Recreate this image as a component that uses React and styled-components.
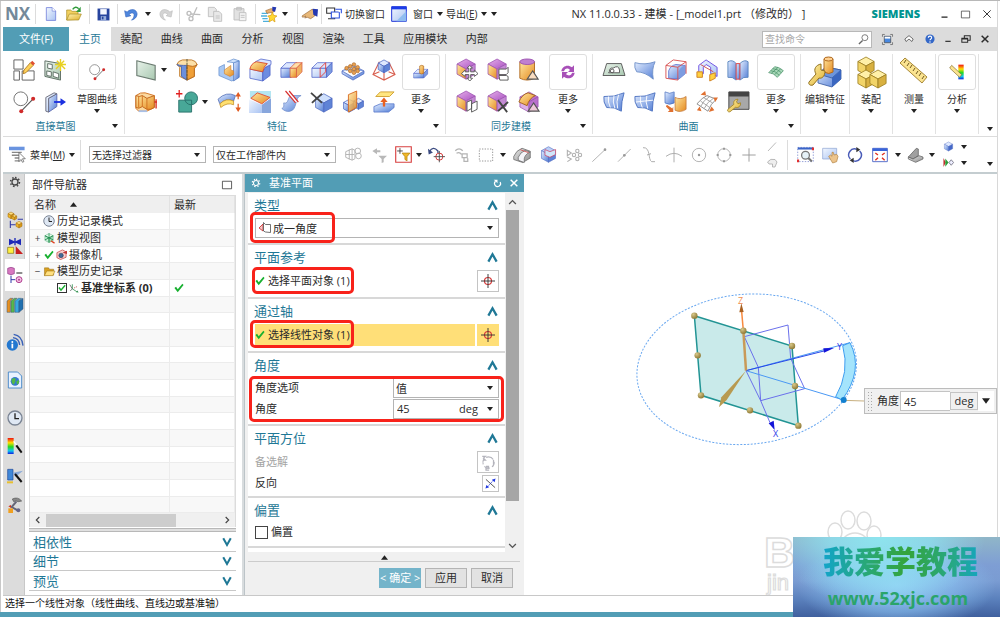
import React from "react";
import styled, { createGlobalStyle } from "styled-components";

const Global = createGlobalStyle`
  *, *::before, *::after { box-sizing: border-box; }
  body { margin: 0; background: #fff; color: #2b2b2b; font: 11px/16px "Open Sans", "Noto Sans CJK SC", sans-serif; }
  button, input, select { font: inherit; color: inherit; margin: 0; padding: 0; border: 0; background: none; border-radius: 0; outline: 0; }
  button, select { cursor: pointer; }
  h1, h2, p { margin: 0; font-size: inherit; font-weight: inherit; }
  svg { display: block; flex: none; overflow: visible; }
`;

const teal = "#529db5";
const link = "#1f7896";

/* ---------- drawing helpers ---------- */

const Defs = styled.svg`position: absolute; width: 0; height: 0;`;

const Gradients = () => (
  <Defs aria-hidden="true">
    <defs>
      {[
        ["gb", "#e4eeff", "#4f7bd4"],
        ["gl", "#f2f7ff", "#a9c3f2"],
        ["go", "#ffe7a0", "#e58a20"],
        ["gy", "#fff3b0", "#e0b030"],
        ["gp", "#e6b0ea", "#a850c0"],
        ["gg", "#e8f2ea", "#a8c8b0"],
        ["gk", "#e8e8e8", "#8d8d8d"],
      ].map(([id, a, b]) => (
        <linearGradient key={id} id={id} x1="0" y1="0" x2="1" y2="1">
          <stop offset="0" stopColor={a} />
          <stop offset="1" stopColor={b} />
        </linearGradient>
      ))}
      <linearGradient id="rainbow" x1="0" y1="0" x2="0" y2="1">
        <stop offset="0" stopColor="#f01010" />
        <stop offset=".3" stopColor="#ffe000" />
        <stop offset=".55" stopColor="#20d820" />
        <stop offset=".8" stopColor="#10c8f0" />
        <stop offset="1" stopColor="#1020e0" />
      </linearGradient>
      <radialGradient id="ball" cx=".35" cy=".3" r=".8">
        <stop offset="0" stopColor="#d8c88a" />
        <stop offset="1" stopColor="#86702a" />
      </radialGradient>
    </defs>
  </Defs>
);

const Cube = ({ x = 12, y = 12, r = 10, t = "#dfe9ff", l = "url(#gb)", q = "#5f83d6", s = "#4a66c0" }) => {
  const w = r * 0.9, h = r / 2;
  return (
    <g stroke={s} strokeWidth=".8" strokeLinejoin="round">
      <path fill={t} d={`M${x} ${y - r}L${x + w} ${y - h}L${x} ${y}L${x - w} ${y - h}Z`} />
      <path fill={l} d={`M${x - w} ${y - h}L${x} ${y}V${y + r}L${x - w} ${y + h}Z`} />
      <path fill={q} d={`M${x + w} ${y - h}L${x} ${y}V${y + r}L${x + w} ${y + h}Z`} />
    </g>
  );
};

const Slab = ({ x, y, w, h, d, f = "url(#gb)", t = "#dce7ff", q = "#7d9ce0", s = "#4a5fc8" }) => (
  <g stroke={s} strokeWidth=".8" strokeLinejoin="round">
    <path fill={f} d={`M${x} ${y}h${w}v${h}h${-w}z`} />
    <path fill={t} d={`M${x} ${y}l${d} ${-d}h${w}l${-d} ${d}z`} />
    <path fill={q} d={`M${x + w} ${y}l${d} ${-d}v${h}l${-d} ${d}z`} />
  </g>
);

const PinkCube = () => <Cube x={11} y={11} r={11} t="url(#gp)" l="url(#go)" q="#c48ad4" s="#9a50b0" />;

const Wrench = ({ x, y, k = 1 }) => (
  <g transform={`translate(${x} ${y}) scale(${k})`}>
    <path fill="url(#gy)" stroke="#a08020" strokeWidth=".8" d="M0 10L6 5C5 2 7 0 10 0L8.500 2.500L10 4.500L12.500 3.500C13 7 10 9 7.500 8L2 12.500C0 13-1 11 0 10Z" />
  </g>
);

const art = {
  newDoc: <><path fill="url(#gl)" stroke="#6a78d8" strokeWidth="1.300" d="M4 1h10l6 6v16H4z" /><path fill="#fff" stroke="#6a78d8" d="M14 1v6h6" /></>,
  open: <><path fill="#f2d060" stroke="#a88a20" d="M1 21V6h6l2 2h9v12z" /><path fill="url(#gy)" stroke="#a88a20" d="M1 21l4-9h18l-4 9z" /><path fill="none" stroke="#2f9a3a" strokeWidth="2.200" d="M10 5c3-4 6-4 9-1" /><path fill="#2f9a3a" d="M22 1v8h-7z" /></>,
  save: <><path fill="#27449e" d="M1 1h22v22H1z" /><path fill="#f4f6ff" d="M6 2h12v10H6z" /><path fill="#9ab0dc" d="M7 15h10v8H7z" /><path fill="#27449e" d="M9 16h3v5H9z" /></>,
  undo: <path fill="#4e86dc" stroke="#3a68c0" d="M1 6l2 10 8-2-3-2c4-4 9-3 8 2 0 3-2 5-4 7 5-1 9-5 9-10C20 3 11 2 5 8z" />,
  redo: <path fill="#d4d4d4" stroke="#bbb" d="M23 6l-2 10-8-2 3-2c-4-4-9-3-8 2 0 3 2 5 4 7-5-1-9-5-9-10C4 3 13 2 19 8z" />,
  cut: <g fill="none" stroke="#bdbdbd" strokeWidth="2"><circle cx="6" cy="11" r="3" /><circle cx="9" cy="19" r="3" /><path d="M9 12l14 1M11 17L18 2" /></g>,
  copy: <g fill="#e8e8e8" stroke="#bdbdbd" strokeWidth="1.300"><path d="M2 2h9l3 3v11H2z" /><path d="M10 8h8l4 4v11H10z" /><path d="M13 15h6M13 18h6" /></g>,
  paste: <g fill="#e2e2e2" stroke="#bdbdbd" strokeWidth="1.300"><path d="M3 4h15v17H3zM7 2h7v4H7z" /><path fill="#f4f4f4" d="M11 10h10v12H11z" /><path d="M13 14h6M13 17h6" /></g>,
  wand: <><path stroke="#4db0dc" strokeWidth="2" d="M1 11h9M0 15h9M2 19h8M3 23h9" /><path fill="#e8b070" stroke="#a06a30" d="M7 7l8-3 5 1-1 4-10 2z" /><path fill="#2438b0" d="M17 1l6 1-2 7-4-2z" /><path fill="#ffd830" stroke="#d89a10" d="M17 9l2 5 5 1-4 3 1 6-4-3-5 3 1-6-3-3 5-1z" /></>,
  hand: <><path fill="#e8b878" stroke="#9a6a38" d="M0 15l9-6 6-4 5 2-1 8-6 4-5-2-4 1 2-3-5 2z" /><path fill="#2438b0" d="M16 4l8 1-1 11-6-3z" /></>,
  swap: <g fill="#fff" strokeWidth="1.600"><path stroke="#333" d="M1 3h12v8H1z" /><path stroke="#333" d="M3 19h10v-6" /><path stroke="#2b50e0" d="M8 9h12v9H8z" /><path stroke="#2b50e0" d="M14 5h9v6" /></g>,
  win: <><path fill="url(#gl)" stroke="#2438d8" strokeWidth="1.500" d="M1 1h22v22H1z" /><path fill="#1c3ce8" d="M1 1h22v4H1z" /><path fill="#8fbdf0" d="M23 8v15H8z" /></>,
  sketch: <g fill="#fff" stroke="#5a5a5a"><path d="M1 1h10v10H1zM1 13h6v10H1zM10 13h13v10H10z" /><path fill="#ffd25a" stroke="#b07a20" d="M12 12l7-8 3 3-8 8-3 1z" /><path fill="#e05030" stroke="none" d="M19 4l2-2 3 3-2 2z" /></g>,
  sketchNew: <><path fill="url(#gg)" stroke="#5a6a60" d="M1 2l17 3v18L1 19z" /><path fill="#fff" stroke="#5a6a60" d="M4 5l5 1v5l-5-1zM3 13l5 1v5l-5-1zM10 14l6 2v5l-6-2z" /><path stroke="#e8d020" strokeWidth="1.500" d="M18 0v13M12 6h12M14 2l9 9M22 2l-9 9" /></>,
  circLine: <><circle cx="8.500" cy="8.500" r="7.500" fill="none" stroke="#6a6a6a" /><path stroke="#555" strokeWidth="1.200" d="M9 22L22 8.500" /><circle cx="9" cy="22" r="2.200" fill="#d02a2a" /><circle cx="22" cy="8.500" r="2.200" fill="#d02a2a" /></>,
  extrude: <><path fill="url(#gb)" stroke="#5a68b0" d="M5 8l9-5v14l-9 6z" /><path fill="url(#gl)" stroke="#6b6b7a" d="M2 7l9-5 3 1-9 5v15l-3-1z" /><path stroke="#1c30e0" strokeWidth="2" d="M11 12h8" /><path fill="#1c30e0" d="M18 8l6 4-6 4z" /></>,
  datum: <path fill="url(#gg)" stroke="#6a7a70" strokeWidth="1.200" d="M2 2l20 5v16L2 18z" />,
  revolve: <><path fill="#fce0a8" stroke="#c07828" d="M1 6q1-4 6-5h10q5 1 6 5l-3 3v10l-8 4-8-4V9z" /><path fill="#6c90dc" stroke="#4a66b0" d="M1 6q3 3 5 2v11l6 4V7l-4 0q-5 0-7-1z" /><path fill="#f0a038" stroke="#b86a20" d="M12 7l6 1q3 0 5-2-1 3-3 4v9l-8 4z" /><path stroke="#553" strokeDasharray="3 1" d="M12 0v24" /></>,
  notch: <><path fill="#a8c8f4" stroke="#5a86c8" strokeWidth=".7" d="M1 9l6-3v6l6 3 4-2V1l6 1v18l-8 4-14-6z" /><path fill="url(#gb)" stroke="#4a76c0" strokeWidth=".7" d="M17 4l6-2v18l-6 4z" /><path fill="#cfe2fc" stroke="#5a86c8" strokeWidth=".7" d="M10 3l7-3 6 2-6 2z" /><path fill="url(#go)" stroke="#d08030" strokeWidth=".7" d="M7 12l7-5v5l3 1v4l-4 2-6-3z" /></>,
  blend: <><path fill="url(#gl)" stroke="#4a5fc8" strokeWidth=".8" d="M1 11l14 3v10L1 21z" /><path fill="#6c8ce0" stroke="#4a5fc8" strokeWidth=".8" d="M15 14q1-5 8-8v12l-8 6z" /><path fill="#dbe6ff" stroke="#4a5fc8" strokeWidth=".8" d="M7 3l6-3 11 2v4l-6 3z" /><path fill="url(#go)" stroke="#d84a30" strokeWidth="1" d="M1 11q1-6 7-8l12 2q-4 3-5 9z" /></>,
  boxOr: <><Slab x={1} y={10} w={11} h={10} d={6} /><Slab x={11} y={10} w={7} h={10} d={6} f="url(#go)" t="#ffe0a8" q="#f0b060" s="#d85a40" /></>,
  boxRed: <><Slab x={1} y={10} w={16} h={10} d={6} f="url(#gl)" /><path fill="none" stroke="#e04040" d="M10 20V10l6-6v10z" /></>,
  pattern: <><path fill="url(#gb)" stroke="#4a66c0" strokeWidth=".8" d="M0 13l12-6 12 6-12 7zM0 13v3l12 7 12-7v-3" />{[[5, 12], [9, 10], [13, 8], [9, 15], [13, 13], [17, 11], [13, 17], [17, 15]].map(([a, b], i) => <circle key={i} cx={a} cy={b - 2} r="2" fill="#e8a050" stroke="#a05a18" strokeWidth=".6" />)}</>,
  draft: <><path fill="none" stroke="#d86050" strokeWidth="1.200" d="M7 3L0 17l12 6 12-6L17 3M0 17l7-3M24 17l-7-3M12 15v8" /><Cube y={8} r={7} /></>,
  extrude2: <><path fill="#fbd9a0" stroke="#d07020" d="M1 5q5-4 10-3l10 3v13l-8 4H4l-3-3z" /><path fill="url(#go)" stroke="#c06018" d="M1 5q4 2 7 0l5 3 8-3v13q-4 3-8 2l-5-3q-4 3-7 1z" /><path stroke="#d07020" fill="none" d="M8 5v12M13 8v12M4 6v12" /><path stroke="#a8c0e8" strokeWidth="2" d="M4 22h9" /><path stroke="#d83020" strokeWidth="1.500" d="M23 9v10M21 12h3" /></>,
  unite: <><path fill="#48a898" stroke="#27706a" d="M3 10h14v13H3z" /><circle cx="16.500" cy="8" r="7" fill="#48a898" stroke="#27706a" /><path fill="none" stroke="#27706a" d="M17 15v-5h-7" /><path stroke="#e02020" strokeWidth="1.400" d="M0 3h7M3.500 -1v8" /></>,
  thicken: <><path fill="url(#gb)" stroke="#4a66b0" strokeWidth=".8" d="M0 9q9-9 19-4l-2 6Q9 7 2 14z" /><path fill="#ffe070" stroke="#c08a20" strokeWidth=".8" d="M2 14q7-7 15-3v4q-7-3-14 3z" /><path stroke="#e05a20" strokeWidth="1.300" d="M22 5v4M22 14v5" /><path fill="#e05a20" d="M19 6l3-5 3 5zM19 18l3 5 3-5z" /></>,
  chamfer: <><path fill="#b4e6f2" d="M1 0h23v8H1z" /><path fill="url(#gl)" d="M0 9l14 6v9H0z" /><path fill="#88a6dc" d="M14 15l10-7v16H14z" /><path fill="url(#go)" stroke="#e05038" d="M2 8l7-6 14 5-9 7z" /></>,
  trim: <><path fill="url(#gb)" stroke="#6a88c8" strokeWidth=".8" d="M4 13c6 2 4-8 9-8l10 0c-7 1-4 16-12 17-4 1-7-1-9-3 3-1 2-4 2-6z" /><path stroke="#fff" strokeWidth="3" d="M8 0l10 12" /><path stroke="#d83030" strokeWidth="1.300" d="M6 0l11 13M10 0l10 12" /></>,
  delBody: <><Cube x={14} r={10} y={13} t="#cfe0fc" /><path stroke="#444" strokeWidth="2" d="M0 2l12 11M12 3L1 13" /></>,
  mirror: <><Cube x={8} y={16} r={7} /><Cube x={18} y={14} r={6} /><path fill="url(#go)" fillOpacity=".85" stroke="#d86a20" d="M7 4l9-4v18l-9 5z" /></>,
  offset: <><path fill="#ffe680" stroke="#d0a030" d="M3 6l5-5h15l-5 5z" /><path stroke="#e86020" strokeWidth="2.500" d="M12 17V10" /><path fill="#e86020" d="M8 12l4-5 4 5z" /><path fill="url(#gb)" stroke="#5070c8" strokeWidth=".8" d="M1 17l7-3h15v4l-6 5H1z" /><path stroke="#e86020" strokeWidth="2.500" d="M12 17V11" /></>,
  moreFeat: <><Slab x={1} y={14} w={15} h={7} d={6} /><path fill="url(#go)" stroke="#b06a20" d="M10 3q3-2 6 0v11q-3 2-6 0z" /></>,
  moveFace: <><PinkCube /><path fill="#fff" stroke="#555" d="M15 7l3 3h-2v4h4v-2l4 4-4 3v-2h-4v4h2l-3 3-3-3h2v-4h-4v2l-4-3 4-4v2h4v-4h-2z" /></>,
  resize: <><PinkCube /><path fill="#fff" stroke="#555" d="M13 11h8l2-2v6l-2 2h-8zM13 18h8l2 1v4h-9z" /></>,
  cyl: <><path fill="url(#go)" stroke="#b06a20" d="M2 3v18q8 4 16 0V3z" /><ellipse cx="10" cy="3" rx="8" ry="3" fill="#c080d0" stroke="#9a50b0" /><path fill="#f8dcc0" stroke="#555" strokeWidth="1.200" d="M16 13l6 9H10z" /></>,
  copyFace: <><PinkCube /><path fill="#fff" stroke="#555" d="M12 12l5-2v9l-5 3zM17 14l6-3v9l-6 3z" /></>,
  delFace: <><PinkCube /><path stroke="#444" strokeWidth="2" d="M12 10l10 13M23 12l-11 10" /></>,
  blendFace: <><Cube r={11} t="url(#gp)" l="#dcb0e8" q="#b870cc" s="#9a50b0" /><path fill="url(#go)" stroke="#a06020" d="M1 12q3-8 10-10l8 3q-7 3-9 11z" /><path fill="#eec8d8" stroke="#555" strokeWidth="1.200" d="M17 13l6 9H11z" /></>,
  cycle: <g fill="#a850b8"><path d="M2 11C3 3 12 0 18 5l3-3v10h-9l3-3c-4-4-8-2-9 2z" /><path d="M22 13c-1 8-10 11-16 6l-3 3V12h9l-3 3c4 4 8 2 9-2z" /></g>,
  surf1: <><path fill="url(#gg)" stroke="#555" d="M4 5h16l4 13H0z" /><path fill="#fff" stroke="#555" d="M7 14q0-5 4-4 6-4 7 2l0 3H6z" /><circle cx="10" cy="13" r="2" fill="none" stroke="#555" /></>,
  surf2: <path fill="url(#gb)" stroke="#7090c8" d="M1 4q11 3 22-1-4 8-2 19Q12 14 3 14 0 10 1 4z" />,
  surf3: <><path fill="url(#gb)" stroke="#4a5fc8" strokeWidth=".8" d="M4 21V13q2-6 8-7l10 1v9l-7 6z" /><path fill="#7d9ce0" d="M15 14q1-5 7-7v9l-7 6z" /><path fill="none" stroke="#d85050" d="M1 7l8-6 14 2v13M1 7v14l13 2V9L1 7M14 9l9-6" /></>,
  surf4: <g fill="none" stroke="#6a4ae0"><path fill="url(#gl)" d="M3 16V7l8-6 12 8v10l-7-3V9l-5-3-3 3v7z" /><path stroke="#d04848" d="M5 6l14 8" /><path fill="#ffd040" stroke="#d08020" d="M1 14h6v6H1zM15 17l6-2v6l-6 3z" /></g>,
  surf5: <g stroke="#5a86c0" fill="url(#gb)"><path d="M1 3q5-3 9 2v18q-4-4-9-3z" /><path d="M14 5q5-5 9-2v17q-5-1-9 3z" /><path stroke="#e04040" d="M10 5h4v17h-4z" /></g>,
  surf6: <><path fill="url(#gb)" stroke="#4a70c0" d="M1 6q11 1 22-4-3 9-3 20-8-5-16-4Q0 12 1 6z" /><path fill="none" stroke="#fff" d="M6 6q-1 6 2 12M12 5q-2 7 1 14M17 4q-3 8-1 15" /></>,
  surf7: <><path fill="url(#gb)" stroke="#4a70c0" d="M1 6q11 1 22-4-3 9-3 20-8-5-16-4Q0 12 1 6z" /><path fill="none" stroke="#fff" d="M7 6q-1 6 2 12M14 5q-2 7 1 14M2 12q9-1 19-2" /></>,
  surf8: <><path fill="url(#gb)" stroke="#4a70c0" strokeWidth=".8" d="M0 1q5 3 10 0v12q-5 3-10 0z" /><path fill="url(#go)" stroke="#c07030" strokeWidth=".8" d="M11 7q6 3 12-1v14q-6 4-12 1z" /><path fill="#e07030" d="M2 15l6 4 1-2v6H3l2-2-4-4z" /></>,
  surf9: <><path fill="#fff" stroke="#777" strokeWidth=".9" d="M1 14q6-7 11-9l10 4q-6 5-9 13z" /><path stroke="#999" fill="none" strokeWidth=".9" d="M5 11l10 7M8 7l10 6M5 17q3-7 10-11M9 19q3-7 10-11" /><path fill="#e07030" d="M5 4l5-4 1 5zM14 23l6-2-3-4zM21 12l3-5-5 0zM1 21l5 1-2-5z" /></>,
  surf10: <><path fill="#a8a8a8" stroke="#444" d="M2 1h22v19H2z" /><path fill="#444" d="M2 1h22v5H2z" /><Wrench x={1} y={9} k={1.1} /></>,
  mesh: <g stroke="#3f8a60" fill="#a8d8b8"><path d="M1 13L10 4q6 0 13 6l-9 10Q8 13 1 13z" /><path fill="none" d="M4 10q7 0 13 7M7 7q7 0 13 6M5 14l10-9M10 16l9-9" /></g>,
  edit: <><path fill="url(#gb)" stroke="#3458a0" strokeWidth=".8" d="M9 18l8-7 15 3v9l-9 8-14-4z" /><path fill="#6d95dc" stroke="#3458a0" strokeWidth=".8" d="M9 18l8-7 15 3-9 8z" /><path fill="#3a66c0" d="M23 22l9-8v9l-9 8z" /><path fill="url(#go)" stroke="#b06a20" d="M15 3q5-3 9 0v13q-4 3-9 0z" /><ellipse cx="19.500" cy="3" rx="4.500" ry="2" fill="#ffd090" stroke="#b06a20" /><path fill="url(#gy)" stroke="#907020" d="M0 26l7-8c-3-5 0-9 5-10l0 6 4 1c0 5-3 8-6 7l-6 7c-3 1-5-1-4-3z" /></>,
  assy: <>{[[11, 10], [11, 23], [23, 23]].map(([a, b], i) => <Cube key={i} x={a} y={b} r={9} t="#fff0a8" l="#f2d468" q="#d8b040" s="#9a7c20" />)}</>,
  measure: <><path fill="#fbe490" stroke="#a88838" d="M2 7l5-5 22 19-5 6z" /><path stroke="#705820" d="M8 4l-2 3M11 7l-2 3M14 9l-2 3M17 12l-2 3M20 15l-2 3M23 17l-2 3M26 20l-2 3" /></>,
  analyse: <><path fill="url(#rainbow)" d="M14 1h8v22h-8z" /><path fill="#fbe490" stroke="#806828" d="M1 6l3-4 15 14-3 4z" /></>,
  menu: <><path fill="#6a94e0" d="M0 1h22v5H0z" /><path fill="#888" d="M4 8h14v2H4zM4 12h12v2H4zM8 16h10v2H8zM8 20h8v2H8z" /><path fill="#fff" stroke="#555" d="M14 9v13l3-3 2 4 2-1-2-4h4z" /></>,
  g1: <g fill="none" stroke="#b0b0b0" strokeWidth="1.300"><path d="M1 8l9-4v16l-9-4zM1 12h12M6 5v14M10 4l4 2v12l-4 2" /><circle cx="18" cy="7" r="4" /><circle cx="19" cy="14" r="4" /></g>,
  g2: <g fill="#b8b8b8"><path d="M2 6l7-4v3h5v3H9v3z" /><path d="M11 13h13l-5 5v5l-3 1v-6z" /></g>,
  filter: <><path fill="#fff" stroke="#d84040" strokeWidth="1.600" d="M1 1h22v22H1z" /><path fill="#f0b828" stroke="#b08010" d="M10 10h11l-4 5v6l-3-2v-4z" /><path stroke="#444" strokeWidth="1.300" d="M3 7h8M7 3v8" /></>,
  orient: <><path fill="none" stroke="#3a4a80" strokeWidth="1.800" d="M2 8q5-9 12-1v3" /><path fill="#3a4a80" d="M0 4l1 8 6-3z" /><circle cx="16" cy="15" r="5" fill="none" stroke="#d03030" strokeWidth="1.300" /><path stroke="#444" strokeWidth="1.200" d="M16 7v16M8 15h16" /></>,
  g5: <g fill="none" stroke="#b4b4b4" strokeWidth="2"><path d="M2 6q6-6 12 0M4 10q5-3 8 2M13 11h8v6h-8zM16 17v6h6v-5" /></g>,
  dotted: <><path fill="none" stroke="#999" strokeWidth="1.500" strokeDasharray="2 2" d="M2 3h20v18H2z" /></>,
  shade: <><path fill="url(#gk)" stroke="#666" d="M1 14q3-8 11-11l11 4v9l-10 6-12-4z" /><path fill="#f4f4f8" stroke="#666" d="M7 15q3-7 9-9l7 2q-7 3-8 9v5l-8-3z" /><path stroke="#d04040" d="M10 5l11 4" /></>,
  wire: <><Cube r={11} t="#bcd0f8" /><path fill="#cfe6fb" stroke="#d04060" d="M7 5l7 3 8-3v7l-8 4-7-3z" /></>,
  g8: <g fill="none" stroke="#b0b0b0" strokeWidth="1.600"><path d="M2 5l6 4-6 4zM2 15l6 3-6 4" /><circle cx="12" cy="12" r="2.500" /><circle cx="17" cy="6" r="2.500" /><circle cx="21" cy="12" r="2.500" /><circle cx="17" cy="18" r="2.500" /></g>,
  line: <><path stroke="#a8a8a8" strokeWidth="1.300" d="M2 22L21 4" /><circle cx="21" cy="4" r="2" fill="#999" /></>,
  line2: <><path stroke="#a8a8a8" strokeWidth="1.300" d="M3 22L22 3" /><circle cx="12.500" cy="12.500" r="2" fill="#999" /></>,
  curve: <path fill="none" stroke="#a8a8a8" strokeWidth="1.400" d="M3 1c12-1 7 18 13 21h5M9 12l6-2" />,
  arcUp: <path fill="none" stroke="#a8a8a8" strokeWidth="1.400" d="M0 14q12-9 24 0M12 1v22" />,
  circ: <><circle cx="12" cy="12" r="10" fill="none" stroke="#a8a8a8" strokeWidth="1.300" /><circle cx="12" cy="12" r="1.800" fill="#999" /></>,
  circ4: <><circle cx="12" cy="12" r="9.500" fill="none" stroke="#a8a8a8" strokeWidth="1.300" /><path stroke="#999" strokeWidth="3" d="M12 1v3M12 20v3M1 12h3M20 12h3" /></>,
  plus: <path stroke="#999" strokeWidth="1.400" d="M12 2v20M2 12h20" />,
  slash: <path stroke="#aaa" strokeWidth="1.600" d="M4 20L20 3" />,
  tag: <path fill="#eee" stroke="#aaa" strokeWidth="1.600" d="M3 10q6-8 15-5l4 5-4 10h-5v-6H6z" />,
  zoomFit: <><path fill="#fff" stroke="#6a7ac8" strokeDasharray="2 2" d="M1 2h22v20H1z" /><path fill="#3a64c8" d="M1 2h22v3H1z" /><circle cx="12" cy="13" r="5.500" fill="#e6f2f8" stroke="#777" strokeWidth="1.800" /><path stroke="#777" strokeWidth="3" d="M16 17l5 5" /><path fill="#e03030" d="M21 2h3v4h-3zM0 19h3v4H0z" /></>,
  pan: <><path fill="url(#gl)" stroke="#8aa0d0" d="M1 2h21v16H1z" /><path fill="#ecc48c" stroke="#b08040" d="M10 14l3-2 2 2 0-6 2 0 1 4 4-1 2 3-2 8-6 2z" /></>,
  rotate: <g fill="none" stroke="#4a5cb8" strokeWidth="2.200"><path d="M5 18A9 9 0 0 1 15 3.500M19 6A9 9 0 0 1 9 20.500" /><path fill="#333" stroke="none" d="M14 0l6 4-6 4zM10 16v8l-6-4z" /></g>,
  fit: <><path fill="#fff" stroke="#5068c8" strokeWidth="1.400" d="M1 2h22v20H1z" /><path fill="#3a64d8" d="M1 2h22v4H1z" /><path stroke="#e03020" strokeWidth="2" d="M5 9l4 3M19 9l-4 3M5 20l4-4M19 20l-4-4" /></>,
  clip: <><path fill="#a0a0a0" stroke="#555" d="M2 15L14 2l3 1v10l-8 5z" /><path fill="url(#gk)" stroke="#555" d="M2 15l7 3 9-5 6 2v3l-11 5-11-5z" /></>,
  cube: <Cube q="#4468c8" />,
  playRG: <><path fill="#c03030" d="M1 2l5 10-5 10z" /><path fill="#28a038" d="M5 3l7 9-7 9z" /><path fill="#eef" stroke="#556" strokeWidth="1.500" d="M13 12l5-6 5 6-5 6z" /></>,
  gear: <g fill="none" stroke="currentColor"><circle cx="12" cy="12" r="6" strokeWidth="2.600" /><path strokeWidth="3" strokeDasharray="3 4.070" d="M12 3a9 9 0 1 1-.01 0" /></g>,
  asmNav: <><Cube x={6} y={5} r={5} t="#ffe080" l="#f0b828" q="#d89a18" s="#a87010" /><Cube x={11} y={8} r={4} t="#ffe080" l="#f0b828" q="#d89a18" s="#a87010" /><path stroke="#3038a8" strokeWidth="1.600" fill="none" d="M5 13v11M5 19h8M16 11h8" /><Cube x={18} y={19} r={5} t="#ffe080" l="#f0b828" q="#d89a18" s="#a87010" /></>,
  constraint: <><path fill="#1c28b8" d="M3 1l8 4V0h2v5l8-4v10l-8-4v4h-2V7l-8 4z" /><path fill="#fff040" stroke="#807010" d="M1 14h9v9H1z" /><path fill="#c82020" d="M13 12v12h11z" /></>,
  partNav: <><path fill="#d878c0" stroke="#90408a" d="M1 2q5-3 10 0v8q-5 3-10 0z" /><path stroke="#555" strokeWidth="2" d="M14 9h9" /><path stroke="#3038a8" strokeWidth="1.500" fill="none" d="M6 13v11M6 19h6" /><circle cx="18" cy="19" r="4.500" fill="#f4c0e4" stroke="#b04090" strokeWidth="1.500" /><circle cx="18" cy="19" r="1.500" fill="#b04090" /></>,
  books: <g stroke="#305070" strokeWidth=".7"><path fill="#e89020" d="M0 6l5-4h4L5 6v17H0z" /><path fill="#58b848" d="M6 6l5-4h4l-4 4v17H6z" /><path fill="#38a8e0" d="M12 6l5-4h5l-4 4v17h-6z" /><path fill="#2070b0" d="M18 6l6-4v16l-6 5z" /></g>,
  info: <><circle cx="8" cy="15" r="8.500" fill="#2478d0" /><circle cx="8" cy="10.500" r="1.500" fill="#fff" /><path stroke="#fff" strokeWidth="2.600" d="M8 13v7" /><path fill="none" stroke="#3a62b8" strokeWidth="2" d="M9 4q9 1 10 11M10 -1q13 2 14 17" /></>,
  html: <><path fill="#e8f2ff" stroke="#4888c8" strokeWidth="1.400" d="M2 0h14l6 6v18H2z" /><circle cx="12" cy="14" r="6.500" fill="#3478d0" /><path fill="#50b848" d="M7 11q5-4 6 0 0 5-3 8-4-2-3-8zM14 14l4-2v5l-3 2z" /></>,
  clock: <><circle cx="12" cy="12" r="10.500" fill="#dfe8f4" stroke="#7a8494" strokeWidth="2" /><path fill="none" stroke="#222" strokeWidth="2" d="M12 5v8h6" /></>,
  rainbow: <><path fill="url(#rainbow)" d="M1 0h9v24H1z" /><path stroke="#fff" strokeWidth="2" d="M10 5l5 6" /><path stroke="#111" strokeWidth="3" d="M14 11l8 11" /></>,
  rolesA: <><path fill="#4088d8" stroke="#204898" d="M1 2h8v16H1z" /><path fill="#88a8d8" d="M24 4l-11 9-4-6z" /><path stroke="#111" strokeWidth="3" d="M12 9l10 12" /><path fill="#e8c030" d="M0 20h9v3H0z" /></>,
  rolesB: <><path fill="#888" stroke="#555" d="M8 3q8-4 14 3l-5 1q-4-2-7 0z" /><path stroke="#667" strokeWidth="3" fill="none" d="M14 7L7 15l9 5" /><path fill="#f0a020" d="M2 17h7v7H2z" /><path fill="#cc3020" d="M2 14l4-2v4z" /><circle cx="17" cy="20" r="3" fill="#668" /></>,
  views: <><Cube x={11} y={11} r={10} t="#e8fff0" l="#c8f0d8" q="#a8e0bc" s="#188848" /><path fill="none" stroke="#188848" strokeWidth="1.800" d="M11 1v19M2 6l18 9M20 6L2 15" /><path stroke="#e04020" strokeWidth="3" d="M15 17l8 5" /></>,
  camera: <><path fill="#f8d0d0" stroke="#c03838" strokeWidth="1.500" d="M2 8l12-6 8 4v12l-12 5-8-4z" /><circle cx="11" cy="14" r="5" fill="#406898" stroke="#223" /><path fill="#c03838" d="M14 8l10-4v7z" /></>,
  folder: <><path fill="#d8a020" stroke="#906810" d="M1 21V4h9l2 3h9v13z" /><path fill="#ffe080" stroke="#906810" d="M1 21l5-10h18l-5 10z" /></>,
  csys: <g fill="none" strokeWidth="1.800"><path stroke="#208840" d="M8 3v11l11 7" /><path stroke="#555" d="M2 4l6 10-5 5" /><path stroke="#c04040" strokeDasharray="3 2" d="M12 12l9-4" /><path fill="#208840" stroke="none" d="M23 23l-6-1 3-4z" /></g>,
  check: <path fill="#18b030" d="M1 12l4-3 4 6L20 2l3 3L9 22z" />,
  angle: <><path fill="#f4c8c8" stroke="#c83838" strokeWidth="1.800" d="M0 12l8-8v14z" /><path fill="#fff" stroke="#444" strokeWidth="1.500" d="M9 1l4 4h10v16l-10-1-4-2z" /></>,
  target: <><circle cx="12" cy="12" r="6" fill="none" stroke="#d83838" strokeWidth="2" /><path stroke="#333" strokeWidth="1.600" d="M12 0v24M0 12h24" /></>,
  alt: <g fill="none" stroke="#b4b4bc" strokeWidth="2"><path strokeDasharray="9 4" d="M12 3a9 9 0 1 1-.01 0" /><path d="M2 2h5l-3 3 3 3H3M8 18h4v3H8v3h5M20 8v7" /></g>,
  flip: <><path stroke="#333" strokeWidth="1.800" d="M2 3l20 18" /><path stroke="#2038e0" strokeWidth="1.800" strokeDasharray="4 2" d="M4 21L20 3" /><path fill="#2038e0" d="M23 1l-2 8-6-5zM1 23l2-8 6 5z" /></>,
  fullscr: <><path fill="none" stroke="#555" strokeWidth="1.500" d="M1 6V1h5M18 1h5v5M23 18v5h-5M6 23H1v-5" /><path fill="#4888e0" stroke="#444" strokeWidth="1.500" d="M5 5h14v14H5z" /><path fill="#fff" d="M6 6h12v4H6z" /></>,
  up2: <path fill="#fff" stroke="#444" strokeWidth="1.800" d="M2 12l10-8 10 8-3 6-7-6-7 6z" />,
  help: <><circle cx="12" cy="12" r="11" fill="#3468c8" /><path fill="none" stroke="#fff" strokeWidth="2.600" d="M8 9q0-4 4-4t4 4c0 3-4 3-4 6" /><circle cx="12" cy="19" r="1.700" fill="#fff" /></>,
  min: <path stroke="currentColor" strokeWidth="3.500" d="M4 19h16" />,
  max: <path fill="none" stroke="currentColor" strokeWidth="1.800" d="M1 3h22v18H1z" />,
  close: <path stroke="currentColor" strokeWidth="2.800" d="M1 1l22 22M23 1L1 23" />,
  closeB: <path stroke="currentColor" strokeWidth="4.500" d="M2 2l20 20M22 2L2 22" />,
  restore: <g fill="none" stroke="currentColor" strokeWidth="2.500"><path d="M2 10h14v10H2zM2 12h14M8 9V4h14v11h-5" /></g>,
  search: <><circle cx="15" cy="8" r="6.500" fill="none" stroke="#666" strokeWidth="1.800" /><path stroke="#666" strokeWidth="3" d="M10 14l-8 8" /></>,
  reset: <><path fill="none" stroke="currentColor" strokeWidth="3" d="M7 6a8 8 0 1 0 12 2" /><path fill="currentColor" d="M2 2h10v9z" /></>,
  up: <path fill="none" stroke="currentColor" strokeWidth="5" d="M3 21l9-16 9 16" />,
  down: <path fill="none" stroke="currentColor" strokeWidth="5" d="M3 3l9 16 9-16" />,
  thinUp: <path fill="none" stroke="currentColor" strokeWidth="3.500" d="M3 16l9-9 9 9" />,
  thinDown: <path fill="none" stroke="currentColor" strokeWidth="3.500" d="M3 8l9 9 9-9" />,
  thinLeft: <path fill="none" stroke="currentColor" strokeWidth="3.500" d="M16 3l-9 9 9 9" />,
  thinRight: <path fill="none" stroke="currentColor" strokeWidth="3.500" d="M8 3l9 9-9 9" />,
};

const Icon = ({ n, s = 18, box = 24 }) => (
  <svg width={s} height={s} viewBox={`0 0 ${box} ${box}`} aria-hidden="true">{art[n]}</svg>
);

const Caret = ({ up, w = 6 }) => (
  <svg width={w} height={w - 2} viewBox="0 0 6 4" aria-hidden="true">
    <path fill="#222" d={up ? "M3 0l3 4H0z" : "M0 0h6L3 4z"} />
  </svg>
);

/* ---------- shell ---------- */

const Shell = styled.div`
  min-height: 100vh; display: flex; flex-direction: column; position: relative;
  border-top: 1px solid #b8b8b8; border-bottom: 5px solid ${teal};
`;
const Frame = styled.div`
  flex: 1; display: flex; flex-direction: column; margin: 0 2px 0 0;
  padding-left: 2px; border-left: 1px solid #c8c8c8; border-right: 1px solid #d8d8d8;
`;
const Bar = styled.header`
  display: flex; align-items: center; height: 26px; font-size: 10px; white-space: nowrap;
`;
const Logo = styled.span`width: 28px; padding-left: 2px; font-size: 17px; font-weight: 700; color: #74899a;`;
const Sep = styled.span`
  flex: none; width: 9px; height: ${(p) => p.$h || 20}px;
  background: linear-gradient(#dcdcdc, #dcdcdc) center / 1px 100% no-repeat;
`;
const Tool = styled.button`
  flex: none; display: flex; align-items: center; justify-content: center; width: ${(p) => p.$w || 25}px; height: 18px;
`;
const TextTool = styled.button`flex: none; display: flex; align-items: center; gap: ${(p) => p.$gap || 4}px; white-space: nowrap;`;
const Title = styled.h1`margin-left: 70px; font-size: 11px; white-space: pre;`;
const Brand = styled.span`margin-left: auto; margin-right: 14px; font-size: 11px; font-weight: 800; color: #009490;`;

const TabBar = styled.nav`display: flex; align-items: stretch; height: 24px; background: #dcdcdc;`;
const FileTab = styled.button`width: 66px; background: ${teal}; color: #fff;`;
const Tab = styled.button`
  flex: 1 1 auto; color: ${(p) => (p.$on ? link : "#2b2b2b")}; background: ${(p) => (p.$on ? "#fff" : "none")};
`;
const ActiveTab = styled(Tab)`flex: none; width: 42px;`;
const Tabs = styled.div`display: flex; width: 386px;`;
const TabEnd = styled.div`margin-left: auto; margin-right: 4px; display: flex; align-items: center;`;
const Search = styled.label`
  display: flex; align-items: center; width: 110px; height: 17px; margin-right: 5px; padding: 0 2px;
  border: 1px solid #b8b8b8; background: #fff; font-size: 10px;
  input { flex: 1; min-width: 0; height: 15px; }
  input::placeholder { color: #a8a8a8; opacity: 1; }
`;

const Ribbon = styled.section`display: flex; height: 86px; padding-top: 3px; border-bottom: 1px solid #dcdcdc; font-size: 10px;`;
const Group = styled.div`
  flex: none; display: flex; flex-direction: column; width: ${(p) => p.$w}px; height: 80px; border-right: 1px solid #e2e2e2;
`;
const GroupBody = styled.div`display: flex; height: 67px; padding: 0 5px; justify-content: ${(p) => (p.$center ? "center" : "flex-start")};`;
const GroupFoot = styled.div`
  display: flex; align-items: center; padding-right: 6px; height: 16px; color: ${link};
  span { flex: 1; text-align: center; padding-right: 4px; }
`;
const Pair = styled.div`
  display: flex; flex-direction: column; width: ${(p) => p.$w || 31}px; padding-left: ${(p) => p.$pl || 0}px;
  align-items: ${(p) => (p.$w ? "flex-start" : "center")};
`;
const RTool = styled.button`display: flex; align-items: center; gap: 4px; height: 32px;`;
const BigButton = styled.button`
  display: flex; flex-direction: column; align-items: center; width: 38px; margin-left: ${(p) => (p.$end ? "auto" : 0)};
  margin-right: ${(p) => p.$mr || 0}px; white-space: nowrap;
`;
const BigFace = styled.span`
  display: flex; align-items: center; justify-content: center; width: 38px; height: 36px; margin-bottom: 1px;
  border: 1px solid ${(p) => (p.$plain ? "transparent" : "#dedede")}; border-radius: 3px;
`;
const BigLabel = styled.span`margin-bottom: 2px;`;
const Tail = styled.div`flex: 1; display: flex; align-items: flex-end; justify-content: flex-end; padding: 0 4px 5px 0;`;

const SelBar = styled.div`display: flex; align-items: center; height: 37px; border-bottom: 2px solid #c4cdd0; font-size: 10px;`;
const MenuButton = styled(TextTool)`padding-left: 6px; width: 73px;`;
const Stack = styled.div`display: flex; flex-direction: column; width: ${(p) => p.$w || 22}px; align-items: center;`;
const Mini = styled.button`display: flex; align-items: center; justify-content: center; height: 16px;`;
const EndCaret = styled(Mini)`margin-left: auto; align-self: flex-end; padding-right: 4px;`;

const SelectWrap = styled.span`
  position: relative; display: flex; align-items: center; flex: ${(p) => (p.$w ? "none" : 1)}; min-width: 0;
  width: ${(p) => (p.$w ? p.$w + "px" : "auto")}; height: ${(p) => p.$h || 17}px; margin-left: ${(p) => p.$ml || 0}px;
  padding: 0 5px 0 ${(p) => (p.$icon ? 3 : 2)}px; gap: 2px; border: 1px solid #b4b4b4; background: #fff;
  select { flex: 1; min-width: 0; appearance: none; height: 15px; }
`;

const Dropdown = ({ label, value, icon, ...p }) => (
  <SelectWrap $icon={icon} {...p}>
    {icon && <Icon n={icon} s={12} />}
    <select aria-label={label} defaultValue={value}><option>{value}</option></select>
    <Caret />
  </SelectWrap>
);

/* ---------- work area ---------- */

const Work = styled.main`flex: 1; display: flex; min-height: 420px;`;
const Rail = styled.nav`
  display: flex; flex-direction: column; align-items: stretch; width: 22px; background: #dcdcdc; border-right: 1px solid #c8c8c8;
`;
const RailButton = styled.button`
  display: flex; align-items: center; justify-content: center; height: ${(p) => p.$h}px; margin-left: 2px; margin-top: ${(p) => p.$mt}px;
  background: ${(p) => (p.$on ? "#fff" : "none")}; margin-right: ${(p) => (p.$on ? -1 : 0)}px; color: #444;
`;
const Navigator = styled.section`flex: none; width: 219px; padding: 0 6px 0 4px; border-right: 2px solid #d8dcde;`;
const NavHead = styled.div`
  display: flex; align-items: center; justify-content: space-between; height: 21px; padding: 0 4px 0 3px;
`;
const Tree = styled.table`
  width: 100%; border: 1px solid #dcdcdc; border-bottom: 0; border-collapse: separate; border-spacing: 0; table-layout: fixed;
  th { height: 17px; padding: 0 4px; background: #efefef; text-align: left; font-weight: 400; border-right: 1px solid #e2e2e2; line-height: 14px; }
  th:first-child { width: 140px; }
  tbody tr { height: 17px; }
  tbody tr:nth-child(3n) { height: 16px; }
  tbody tr:nth-child(even) { background: #f8f8f8; }
  td { padding: 0 4px; border-right: 1px solid #ececec; border-bottom: 1px solid #ececec; line-height: 14px; overflow: hidden; }
`;
const SortHead = styled.span`display: flex; align-items: center; gap: 14px;`;
const Node = styled.span`
  display: flex; align-items: center; gap: 2px; height: 14px; padding-left: ${(p) => p.$in}px; white-space: nowrap;
  font-weight: ${(p) => (p.$bold ? 700 : 400)};
`;
const Twist = styled.span`width: 7px; margin-right: 1px; color: #444; text-align: center; font-size: 10px;`;
const Tick = styled.span`
  position: relative; display: flex;
  input { appearance: none; width: 10px; height: 10px; border: 1px solid #333; }
  svg { position: absolute; top: 1px; left: 1px; pointer-events: none; }
`;
const HScroll = styled.div`
  display: flex; align-items: center; gap: 4px; height: 14px; padding: 0 4px; background: #f0f0f0; color: #444; border: 1px solid #dcdcdc; border-width: 0 1px;
`;
const HThumb = styled.span`width: 130px; height: 13px; margin-right: auto; background: #cdcdcd;`;
const Split = styled.div`height: 4px; margin: 1px 0 0; border: 1px solid #b8b8b8; border-width: 1px 0; background: #e0e0e0;`;
const Fold = styled.button`
  display: flex; align-items: center; justify-content: space-between; width: 100%; height: ${(p) => p.$h || 20}px; padding: 0 4px;
  border-bottom: 1px solid #c8c8c8; color: ${link}; font-size: 13px; line-height: 18px;
`;

const Dialog = styled.section`
  display: flex; flex-direction: column; flex: none; width: 280px; background: #f0f0f0; border-left: 1px solid #bcc4c8;
`;
const DialogHead = styled.div`
  display: flex; align-items: center; gap: 8px; height: 18px; padding: 0 6px; background: ${teal}; color: #fff;
  h2 { flex: 1; }
  button { display: flex; }
`;
const Scroller = styled.div`display: flex; height: 360px; padding: 1px 4px 0 3px;`;
const Sections = styled.div`flex: 1; min-width: 0; background: #fff;`;
const Section = styled.div`padding: 3px 6px 5px 7px; border-bottom: 2px solid #d8d8d8;`;
const SectionHead = styled.button`
  display: flex; align-items: center; justify-content: space-between; width: 100%; height: 18px; margin-bottom: 4px;
  margin-left: -1px; color: ${link}; font-size: 13px; line-height: 18px;
`;
const Row = styled.div`
  position: relative; display: flex; align-items: center; height: ${(p) => p.$h || 20}px; margin-bottom: ${(p) => p.$mb || 0}px;
  color: ${(p) => (p.$off ? "#a4a4a4" : "inherit")};
`;
const Pick = styled.div`
  flex: 1; display: flex; align-items: center; gap: 3px; height: 22px; margin-right: 2px;
  background: ${(p) => (p.$on ? "#ffdf78" : "none")};
`;
const Square = styled.button`
  display: flex; align-items: center; justify-content: center; width: ${(p) => p.$s || 22}px; height: ${(p) => p.$s || 22}px;
  margin-left: auto; border: 1px solid ${(p) => (p.$on ? "#ffdf78" : "#c4c4c4")}; background: ${(p) => (p.$on ? "#ffdf78" : "#fff")};
`;
const FieldLabel = styled.label`flex: none; width: 138px;`;
const NumberField = styled.span`
  flex: 1; min-width: 0; display: flex; align-items: center; gap: 9px; height: 20px; padding: 0 5px 0 3px; border: 1px solid #b4b4b4;
  input { flex: 1; min-width: 0; }
`;
const Mark = styled.span`
  position: absolute; top: ${(p) => p.$t}px; left: ${(p) => p.$l}px; width: ${(p) => p.$w}px; height: ${(p) => p.$h}px;
  border: 3px solid #f8221a; border-radius: 5px; pointer-events: none; z-index: 1;
`;
const CheckLabel = styled.label`
  display: flex; align-items: center; gap: 3px;
  input { appearance: none; width: 13px; height: 13px; border: 1px solid #444; background: #fff; }
`;
const VScroll = styled.div`
  display: flex; flex: none; flex-direction: column; align-items: center; width: 15px; padding: 5px 0 2px; color: #555;
`;
const VThumb = styled.span`width: 13px; height: 291px; margin: 3px 0 auto; background: #a6a6a6;`;
const DialogFoot = styled.div`display: flex; flex-direction: column; align-items: center; margin: 0 4px 0 3px; padding-top: 3px;`;
const Actions = styled.div`
  display: flex; justify-content: flex-end; gap: 4px; align-self: stretch; margin-top: 1px; padding: 6px 7px 0 0; border-top: 1px solid #ccc;
`;
const Action = styled.button`
  width: 42px; height: 20px; border: 1px solid ${(p) => (p.$main ? "#74b4ca" : "#b4b4b4")};
  background: ${(p) => (p.$main ? "#74b4ca" : "#e2e2e2")}; color: ${(p) => (p.$main ? "#fff" : "inherit")}; white-space: nowrap;
`;

const Viewport = styled.section`position: relative; flex: 1; overflow: hidden; background: #fff;`;
const Scene = styled.svg`position: absolute; top: 0; left: 0;`;
const FloatInput = styled.div`
  position: absolute; top: 214px; left: 340px; display: flex; align-items: center; height: 26px; width: 133px; padding: 0 2px;
  border: 1px solid #bcbcbc; background: #f0f0f0;
  label { margin: 0 1px 0 4px; }
`;
const Grip = styled.span`width: 6px; height: 20px; background: radial-gradient(circle, #aaa 1px, transparent 1px) 0 0 / 3px 3px;`;
const FloatBox = styled.input`width: 50px; height: 20px; padding: 0 3px; background: #fff; border: 1px solid #c4c4c4; border-right: 0;`;
const Unit = styled.button`width: 28px; height: 18px; border: 1px solid #c4c4c4;`;
const UnitCaret = styled.button`display: flex; align-items: center; justify-content: center; flex: 1; height: 20px; background: #fff;`;

const Status = styled.footer`height: 17px; padding-left: 2px; border-top: 1px solid #c8c8c8; font-size: 10px; line-height: 15px; color: #111;`;

const Banner = styled.aside`
  position: absolute; right: 0; bottom: -5px; width: 207px; height: 80px; padding: 4px 0 0 0; text-align: center;
  background: radial-gradient(ellipse at 42% 0, #8ee4ee 0, rgba(142, 226, 240, .75) 30%, transparent 62%),
    radial-gradient(ellipse at 50% 60%, rgba(150, 208, 248, .95) 0, rgba(140, 196, 244, .6) 40%, transparent 68%),
    linear-gradient(#90b6c8 0, #7e9ed4 35%, #7a9cd2 55%, #5a80bc 78%, #40609e 100%);
`;
const BannerName = styled.p`
  padding-left: 8px; font: 900 31px/38px "Noto Sans CJK SC", sans-serif; color: transparent; background: linear-gradient(90deg, #12a4c8 15%, #28a878 35%, #34a43a 55%, #26a888 78%, #12a4c8 92%);
  -webkit-background-clip: text; background-clip: text;
`;
const BannerUrl = styled.p`padding-left: 3px; font: 700 18px/38px "Open Sans", sans-serif; color: #2aa46a;`;

/* ---------- data ---------- */

const syncTools = [["moveFace", "copyFace"], ["resize", "delFace"], ["cyl", "blendFace"]];
const featTools = [["notch", "thicken"], ["blend", "chamfer"], ["boxOr", "trim"], ["boxRed", "delBody"], ["pattern", "mirror"], ["draft", "offset"]];
const surfTools = [["surf1", "surf6"], ["surf2", "surf7"], ["surf3", "surf8"], ["surf4", "surf9"], ["surf5", "surf10"]];
const snapTools = ["wire", "g8", "line", "line2", "curve", "arcUp", "circ", "circ4", "plus"];
const rail = [
  ["gear", 0, 16], ["asmNav", 16, 27], ["constraint", 0, 26], ["partNav", 0, 32], ["books", 0, 28], ["info", 10, 28],
  ["html", 9, 28], ["clock", 10, 27], ["rainbow", 0, 30], ["rolesA", 0, 30], ["rolesB", 0, 28],
];

const Pairs = ({ items }) => items.map(([a, b]) => (
  <Pair key={a}>
    <RTool aria-label={a}><Icon n={a} s={22} /></RTool>
    <RTool aria-label={b}><Icon n={b} s={22} /></RTool>
  </Pair>
));

const Big = ({ icon, label, plain, end, mr }) => (
  <BigButton $end={end} $mr={mr}>
    <BigFace $plain={plain}><Icon n={icon} s={plain ? 32 : 16} box={plain ? 32 : 24} /></BigFace>
    <BigLabel>{label}</BigLabel>
    <Caret />
  </BigButton>
);

const Foot = ({ label }) => <GroupFoot><span>{label}</span><Caret /></GroupFoot>;

const T = ({ n, w, s = 17 }) => <Tool $w={w} aria-label={n}><Icon n={n} s={s} /></Tool>;
const C = ({ w }) => <Tool $w={w} aria-label="展开"><Caret /></Tool>;

const Head = ({ children }) => <SectionHead>{children}<Icon n="up" s={11} /></SectionHead>;

const zp = (pts) => pts.map(([x, y]) => `${630 + x / 3},${280 + y / 3}`).join(" ");

const Model = () => (
  <Scene width="473" height="420" viewBox="524 174 473 420">
    <g fill="#fff" stroke="#dcdcdc" strokeWidth="1.500">
      <ellipse cx="848" cy="520" rx="7" ry="9" />
      <ellipse cx="864" cy="521" rx="7" ry="9" />
      <ellipse cx="835" cy="532" rx="7" ry="9" />
      <ellipse cx="874" cy="535" rx="7" ry="9" />
      <ellipse cx="855" cy="546" rx="14" ry="13" />
      <text x="764" y="567" fontSize="43" fontWeight="700" fontFamily="Liberation Sans, sans-serif">B</text>
      <text x="767" y="590" fontSize="22" strokeWidth="1.200" fontFamily="Liberation Sans, sans-serif">jin</text>
    </g>
    <ellipse cx="746.700" cy="369.300" rx="110" ry="75" transform="rotate(-5 746.700 369.300)" fill="none" stroke="#6aa8f0" strokeDasharray="2 1.500" />
    <polygon points={zp([[193, 107], [486, 198], [505, 437], [213, 346]])} fill="#c9eaea" stroke="#229494" strokeWidth="1.500" />
    <g fill="none" stroke="#6a70ec">
      <polygon points={zp([[343, 170], [474, 135], [482, 235], [524, 326], [392, 362], [385, 262]])} />
      <polyline points={zp([[348, 272], [392, 362], [420, 428]])} />
    </g>
    <g stroke="#4a98f4" fill="none">
      <polyline points={zp([[641, 360], [348, 272], [660, 188]])} />
    </g>
    <polyline points={zp([[348, 272], [590, 211]])} stroke="#2848e8" fill="none" />
    <path d="M842.700 345.700L850 342.700Q864 370 842 400L835.700 396.700Q850 372 842.700 345.700Z" fill="#a4e4fc" stroke="#3a9cf0" />
    <polyline points={zp([[641, 361], [703, 363]])} stroke="#c8b080" fill="none" />
    <circle cx="843.700" cy="400" r="3" fill="#1280d0" />
    <g fill="#1414d8">
      <polygon points={zp([[612, 204], [582, 218], [580, 205]])} />
      <polygon points={zp([[434, 450], [416, 430], [431, 422]])} />
    </g>
    <polyline points={zp([[348, 272], [340, 152]])} stroke="#c89a58" strokeWidth="2.500" fill="none" />
    <polyline points={zp([[340, 152], [335, 95]])} stroke="#f88a40" strokeWidth="1.500" fill="none" />
    <polygon points={zp([[334, 70], [341, 96], [328, 97]])} fill="#a86020" />
    <polygon points={zp([[348, 272], [290, 360], [267, 382], [274, 352]])} fill="#b89a50" />
    {[[193, 107], [340, 152], [486, 198], [203, 226], [495, 318], [213, 346], [360, 391], [505, 437]].map(([x, y]) => (
      <circle key={x} cx={630 + x / 3} cy={280 + y / 3} r="3.200" fill="url(#ball)" />
    ))}
    <g fontSize="9" fontFamily="Open Sans, sans-serif">
      <text x="738" y="304" fill="#f09050">Z</text>
      <text x="837" y="350" fill="#3040e8">Y</text>
      <text x="773" y="437" fill="#3040e8">X</text>
    </g>
  </Scene>
);

const TreeRows = () => (
  <tbody>
    <tr><td><Node $in={9}><Icon n="clock" s={12} />历史记录模式</Node></td><td /></tr>
    <tr><td><Node $in={0}><Twist>+</Twist><Icon n="views" s={11} />模型视图</Node></td><td /></tr>
    <tr><td><Node $in={0}><Twist>+</Twist><Icon n="check" s={10} /><Icon n="camera" s={11} />摄像机</Node></td><td /></tr>
    <tr><td><Node $in={0}><Twist>−</Twist><Icon n="folder" s={11} />模型历史记录</Node></td><td /></tr>
    <tr>
      <td>
        <Node $in={23} $bold>
          <Tick><input type="checkbox" defaultChecked aria-label="基准坐标系" /><Icon n="check" s={8} /></Tick>
          <Icon n="csys" s={10} />基准坐标系 (0)
        </Node>
      </td>
      <td><Icon n="check" s={10} /></td>
    </tr>
    {Array.from({ length: 13 }, (_, i) => <tr key={i}><td /><td /></tr>)}
  </tbody>
);

export default function App() {
  return (
    <Shell>
      <Global />
      <Gradients />
      <Frame>
        <Bar>
          <Logo>NX</Logo><Sep />
          <T n="newDoc" w={22} s={14} /><T n="open" w={23} s={16} /><Sep />
          <T n="save" w={19} s={13} /><Sep />
          <T n="undo" w={19} s={15} /><C w={14} /><T n="redo" w={20} s={15} /><Sep />
          <T n="cut" w={18} s={16} /><T n="copy" w={26} s={16} /><T n="paste" w={23} s={16} /><Sep />
          <T n="wand" w={17} s={16} /><C w={16} /><Sep />
          <T n="hand" w={15} s={16} /><Sep />
          <TextTool $gap={3}><Icon n="swap" s={16} />切换窗口</TextTool>
          <Tool $w={28} aria-label="窗口"><Icon n="win" s={16} /></Tool>
          <TextTool>窗口<Caret /></TextTool>
          <Tool $w={3} aria-label="分隔" />
          <TextTool><span>导出(<u>E</u>)</span><Caret /></TextTool>
          <C w={14} />
          <Title>NX 11.0.0.33 - 建模 - [_model1.prt （修改的） ]</Title>
          <Brand>SIEMENS</Brand>
          <T n="min" w={21} s={9} /><T n="max" w={21} s={9} /><T n="close" w={21} s={8} />
        </Bar>
        <TabBar>
          <FileTab>文件(F)</FileTab>
          <ActiveTab $on>主页</ActiveTab>
          <Tabs>
            {["装配", "曲线", "曲面", "分析", "视图", "渲染", "工具", "应用模块", "内部"].map((t) => <Tab key={t}>{t}</Tab>)}
          </Tabs>
          <TabEnd>
            <Search><input placeholder="查找命令" aria-label="查找命令" /><Icon n="search" s={11} /></Search>
            <T n="fullscr" w={21} s={11} /><T n="up2" w={21} s={10} /><T n="help" w={21} s={10} />
            <T n="min" w={16} s={8} /><T n="restore" w={20} s={10} /><T n="closeB" w={17} s={8} />
          </TabEnd>
        </TabBar>
        <Ribbon>
          <Group $w={122}>
            <GroupBody>
              <Pairs items={[["sketch", "circLine"], ["sketchNew", "extrude"]]} />
              <Big icon="circLine" label="草图曲线" end mr={3} />
            </GroupBody>
            <Foot label="直接草图" />
          </Group>
          <Group $w={321}>
            <GroupBody>
              <Pair $w={46} $pl={5}>
                <RTool aria-label="基准平面"><Icon n="datum" s={22} /><Caret /></RTool>
                <RTool aria-label="拉伸"><Icon n="extrude2" s={22} /></RTool>
              </Pair>
              <Pair $w={37}>
                <RTool aria-label="旋转"><Icon n="revolve" s={22} /></RTool>
                <RTool aria-label="合并"><Icon n="unite" s={22} /><Caret /></RTool>
              </Pair>
              <Pairs items={featTools} />
              <Big icon="moreFeat" label="更多" end />
            </GroupBody>
            <Foot label="特征" />
          </Group>
          <Group $w={147}>
            <GroupBody><Pairs items={syncTools} /><Big icon="cycle" label="更多" end /></GroupBody>
            <Foot label="同步建模" />
          </Group>
          <Group $w={208}>
            <GroupBody><Pairs items={surfTools} /><Big icon="mesh" label="更多" end /></GroupBody>
            <Foot label="曲面" />
          </Group>
          <Group $w={49}><GroupBody $center><Big icon="edit" label="编辑特征" plain /></GroupBody></Group>
          <Group $w={43}><GroupBody $center><Big icon="assy" label="装配" plain /></GroupBody></Group>
          <Group $w={43}><GroupBody $center><Big icon="measure" label="测量" plain /></GroupBody></Group>
          <Group $w={43}><GroupBody $center><Big icon="analyse" label="分析" /></GroupBody></Group>
          <Tail><Caret /></Tail>
        </Ribbon>
        <SelBar>
          <MenuButton><Icon n="menu" s={17} /><span>菜单(<u>M</u>)</span><Caret /></MenuButton>
          <Sep $h={30} />
          <Dropdown label="类型过滤器" value="无选择过滤器" $w={117} $ml={4} />
          <Dropdown label="选择范围" value="仅在工作部件内" $w={123} $ml={7} />
          <Tool $w={5} aria-label="分隔" />
          <T n="g1" /><T n="g2" s={16} /><T n="filter" w={24} /><C w={8} />
          <T n="orient" w={26} /><T n="g5" s={15} /><T n="dotted" w={23} s={16} /><C w={11} />
          <T n="shade" w={28} s={18} />
          {snapTools.map((n) => <T key={n} n={n} s={n === "wire" ? 17 : 16} />)}
          <Stack><Mini aria-label="直线"><Icon n="slash" s={12} /></Mini><Mini aria-label="标记"><Icon n="tag" s={12} /></Mini></Stack>
          <Sep $h={30} />
          <T n="zoomFit" w={26} /><T n="pan" w={24} s={16} /><T n="rotate" s={16} /><T n="fit" s={16} /><C w={11} />
          <T n="clip" w={24} s={16} /><C w={10} />
          <Stack><Mini aria-label="视图"><Icon n="cube" s={11} /></Mini><Mini aria-label="播放"><Icon n="playRG" s={11} /></Mini></Stack>
          <Stack $w={10}><Mini aria-label="视图选项"><Caret /></Mini><Mini aria-label="播放选项"><Caret /></Mini></Stack>
          <EndCaret aria-label="更多选项"><Caret /></EndCaret>
        </SelBar>
        <Work>
          <Rail>
            {rail.map(([n, mt, h]) => (
              <RailButton key={n} $mt={mt} $h={h} $on={n === "partNav"} aria-label={n}><Icon n={n} s={n === "gear" ? 12 : 16} /></RailButton>
            ))}
          </Rail>
          <Navigator>
            <NavHead><h2>部件导航器</h2><Icon n="max" s={10} /></NavHead>
            <Tree>
              <thead><tr><th><SortHead>名称<Caret up w={7} /></SortHead></th><th>最新</th></tr></thead>
              <TreeRows />
            </Tree>
            <HScroll><Icon n="thinLeft" s={8} /><HThumb /><Icon n="thinRight" s={8} /></HScroll>
            <Split />
            <Fold>相依性<Icon n="down" s={10} /></Fold>
            <Fold $h={19}>细节<Icon n="down" s={10} /></Fold>
            <Fold>预览<Icon n="down" s={10} /></Fold>
          </Navigator>
          <Dialog aria-label="基准平面">
            <DialogHead>
              <Icon n="gear" s={10} /><h2>基准平面</h2>
              <button aria-label="重置"><Icon n="reset" s={9} /></button>
              <button aria-label="关闭"><Icon n="closeB" s={8} /></button>
            </DialogHead>
            <Scroller>
              <Sections>
                <Section>
                  <Head>类型</Head>
                  <Row><Dropdown label="类型" value="成一角度" icon="angle" $h={20} /><Mark $t={-6} $l={-5} $w={85} $h={31} /></Row>
                </Section>
                <Section>
                  <Head>平面参考</Head>
                  <Row $h={22}>
                    <Pick><Icon n="check" s={10} />选择平面对象 (1)</Pick>
                    <Square aria-label="选择平面"><Icon n="target" s={14} /></Square>
                    <Mark $t={-3} $l={-3} $w={102} $h={27} />
                  </Row>
                </Section>
                <Section>
                  <Head>通过轴</Head>
                  <Row $h={22}>
                    <Pick $on><Icon n="check" s={10} />选择线性对象 (1)</Pick>
                    <Square $on aria-label="选择轴"><Icon n="target" s={14} /></Square>
                    <Mark $t={-4} $l={-5} $w={104} $h={28} />
                  </Row>
                </Section>
                <Section>
                  <Head>角度</Head>
                  <Row $mb={1}>
                    <FieldLabel>角度选项</FieldLabel>
                    <Dropdown label="角度选项" value="值" $h={20} />
                    <Mark $t={-2} $l={-6} $w={255} $h={46} />
                  </Row>
                  <Row>
                    <FieldLabel htmlFor="angle">角度</FieldLabel>
                    <NumberField><input id="angle" defaultValue="45" /><span>deg</span><Caret /></NumberField>
                  </Row>
                </Section>
                <Section>
                  <Head>平面方位</Head>
                  <Row $h={22} $mb={2} $off>备选解<Square aria-label="备选解" disabled><Icon n="alt" s={15} /></Square></Row>
                  <Row $h={16}>反向<Square $s={17} aria-label="反向"><Icon n="flip" s={11} /></Square></Row>
                </Section>
                <Section>
                  <Head>偏置</Head>
                  <Row $h={18}><CheckLabel><input type="checkbox" />偏置</CheckLabel></Row>
                </Section>
              </Sections>
              <VScroll><Icon n="thinUp" s={9} /><VThumb /><Icon n="thinDown" s={9} /></VScroll>
            </Scroller>
            <DialogFoot>
              <Caret up w={7} />
              <Actions><Action $main>&lt; 确定 &gt;</Action><Action>应用</Action><Action>取消</Action></Actions>
            </DialogFoot>
          </Dialog>
          <Viewport>
            <Model />
            <FloatInput>
              <Grip />
              <label htmlFor="dyn">角度</label>
              <FloatBox id="dyn" defaultValue="45" />
              <Unit>deg</Unit>
              <UnitCaret aria-label="选项"><Caret w={8} /></UnitCaret>
            </FloatInput>
          </Viewport>
        </Work>
        <Status>选择一个线性对象（线性曲线、直线边或基准轴）</Status>
      </Frame>
      <Banner>
        <BannerName>我爱学教程</BannerName>
        <BannerUrl>www.52xjc.com</BannerUrl>
      </Banner>
    </Shell>
  );
}
